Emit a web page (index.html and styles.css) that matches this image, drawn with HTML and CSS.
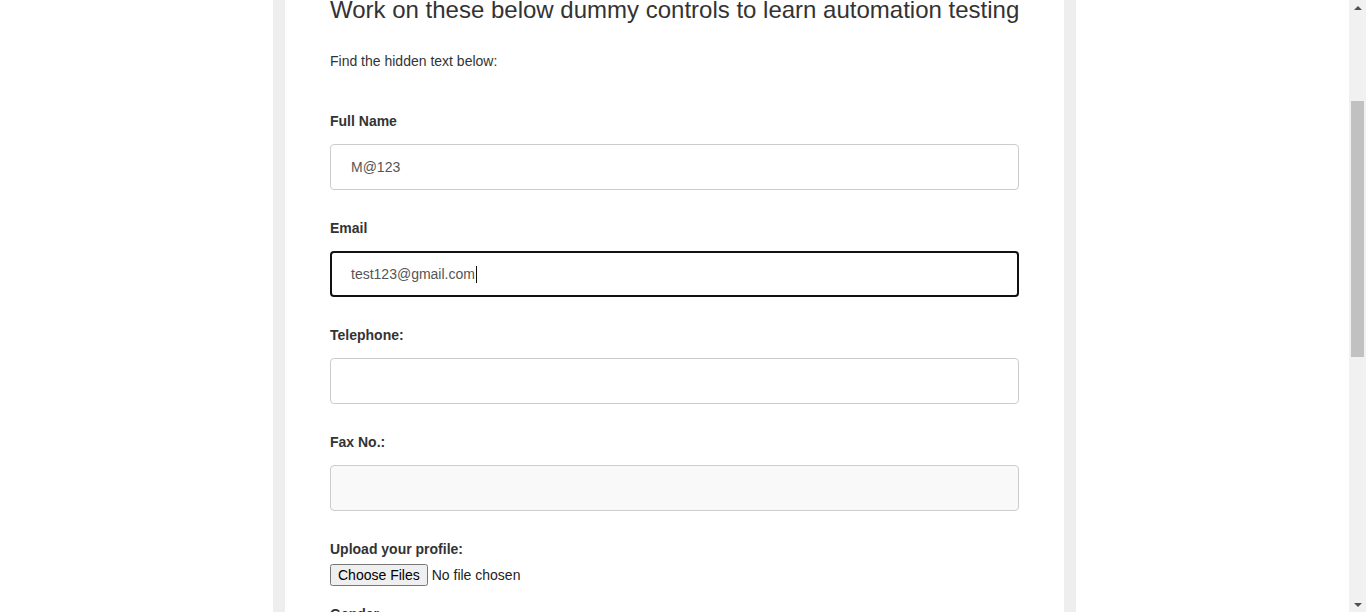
FILE: index.html
```html
<!DOCTYPE html>
<html lang="en">
<head>
<meta charset="utf-8">
<title>Dummy controls</title>
<link rel="stylesheet" href="styles.css">
</head>
<body>
<div class="layout">
  <main class="main">
    <div class="sheet">
      <h1 class="title">Work on these below dummy controls to learn automation testing</h1>
      <p class="hint">Find the hidden text below:</p>

      <div class="field">
        <label class="label" for="fullname">Full Name</label>
        <input class="input" id="fullname" type="text" value="M@123">
      </div>

      <div class="field">
        <label class="label" for="email">Email</label>
        <div class="input focused"><span class="value">test123@gmail.com</span><span class="caret"></span></div>
      </div>

      <div class="field">
        <label class="label" for="tel">Telephone:</label>
        <input class="input" id="tel" type="text">
      </div>

      <div class="field">
        <label class="label" for="fax">Fax No.:</label>
        <input class="input muted" id="fax" type="text">
      </div>

      <div class="field upload">
        <label class="label" for="file">Upload your profile:</label>
        <input class="file" id="file" type="file" multiple>
      </div>

      <div class="field">
        <label class="label">Gender</label>
      </div>
    </div>
  </main>
  <aside class="scrollbar">
    <div class="arrow up"></div>
    <div class="track"><div class="thumb"></div></div>
    <div class="arrow down"></div>
  </aside>
</div>
</body>
</html>
```
FILE: styles.css
```css
html, body {
  margin: 0;
  padding: 0;
  height: 100%;
  overflow: hidden;
  background: #fff;
}
body {
  font-family: "Liberation Sans", Arial, sans-serif;
  color: #333;
}
.layout {
  display: flex;
  height: 612px;
}
.main {
  flex: 1;
  overflow: hidden;
  display: flex;
  justify-content: center;
}
.sheet {
  width: 689px;
  padding: 0 45px;
  border-left: 12px solid #eee;
  border-right: 12px solid #eee;
  background: #fff;
}
.title {
  margin: -3px 0 0;
  font-size: 24px;
  line-height: 26.4px;
  font-weight: normal;
  white-space: nowrap;
  color: #333;
}
.hint {
  margin: 28px 0 40px;
  font-size: 14px;
  line-height: 20px;
}
.field {
  margin-bottom: 28px;
}
.label {
  display: block;
  font-size: 14px;
  line-height: 20px;
  font-weight: bold;
  margin-bottom: 13px;
  color: #333;
}
.input {
  display: block;
  box-sizing: border-box;
  width: 100%;
  height: 46px;
  padding: 0 20px;
  border: 1px solid #ccc;
  border-radius: 4px;
  font-family: "Liberation Sans", Arial, sans-serif;
  font-size: 14px;
  color: #555;
  background: #fff;
  outline: none;
}
.input.focused {
  border: 2px solid #111;
  padding: 0 19px;
  display: flex;
  align-items: center;
}
.caret {
  display: inline-block;
  width: 1px;
  height: 17px;
  background: #111;
  margin-left: 1px;
}
.input.muted {
  background: #f9f9f9;
}
.upload {
  margin-bottom: 18px;
}
.upload .label {
  margin-bottom: 5px;
}
.file {
  font-family: "Liberation Sans", Arial, sans-serif;
  font-size: 14px;
  color: #222;
}
.scrollbar {
  width: 17px;
  flex: none;
  background: #f1f1f1;
  display: flex;
  flex-direction: column;
  align-items: center;
}
.track {
  flex: 1;
  width: 100%;
}
.thumb {
  margin: 84px auto 0;
  width: 13px;
  height: 256px;
  background: #c1c1c1;
}
.arrow {
  width: 0;
  height: 0;
  border-left: 4px solid transparent;
  border-right: 4px solid transparent;
  flex: none;
}
.arrow.up {
  margin: 6px 0 7px;
  border-bottom: 4px solid #505050;
}
.arrow.down {
  margin: 7px 0 5px;
  border-top: 4px solid #505050;
}
```
